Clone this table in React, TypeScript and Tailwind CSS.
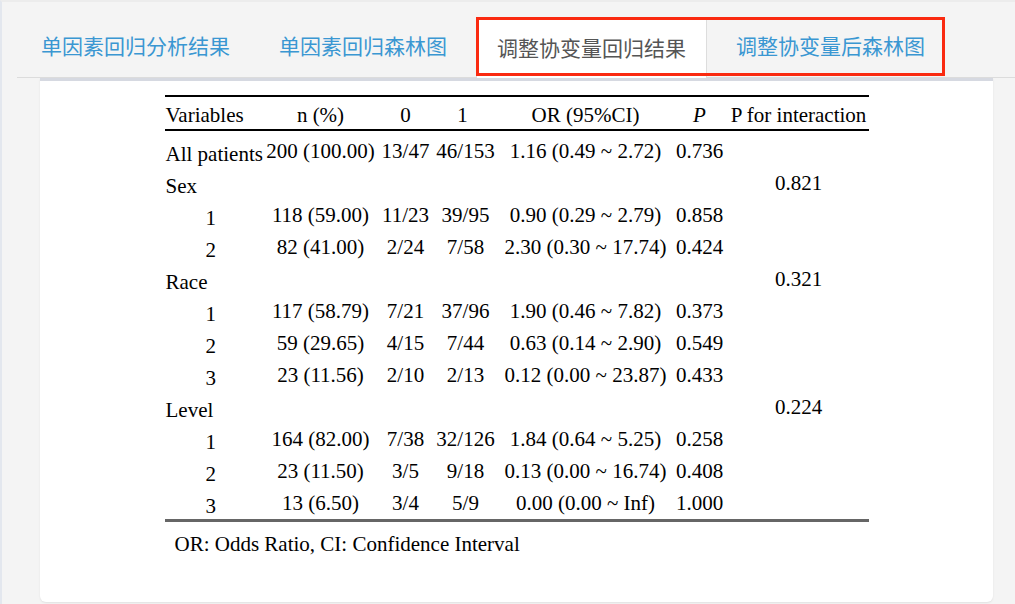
import React from "react";

const tabs = [
  { label: "单因素回归分析结果", active: false },
  { label: "单因素回归森林图", active: false },
  { label: "调整协变量回归结果", active: true },
  { label: "调整协变量后森林图", active: false },
];

type Row = {
  name: string;
  sub?: boolean;
  n?: string;
  c0?: string;
  c1?: string;
  or?: string;
  p?: string;
  inter?: string;
};

const rows: Row[] = [
  { name: "All patients", n: "200 (100.00)", c0: "13/47", c1: "46/153", or: "1.16 (0.49 ~ 2.72)", p: "0.736" },
  { name: "Sex", inter: "0.821" },
  { name: "1", sub: true, n: "118 (59.00)", c0: "11/23", c1: "39/95", or: "0.90 (0.29 ~ 2.79)", p: "0.858" },
  { name: "2", sub: true, n: "82 (41.00)", c0: "2/24", c1: "7/58", or: "2.30 (0.30 ~ 17.74)", p: "0.424" },
  { name: "Race", inter: "0.321" },
  { name: "1", sub: true, n: "117 (58.79)", c0: "7/21", c1: "37/96", or: "1.90 (0.46 ~ 7.82)", p: "0.373" },
  { name: "2", sub: true, n: "59 (29.65)", c0: "4/15", c1: "7/44", or: "0.63 (0.14 ~ 2.90)", p: "0.549" },
  { name: "3", sub: true, n: "23 (11.56)", c0: "2/10", c1: "2/13", or: "0.12 (0.00 ~ 23.87)", p: "0.433" },
  { name: "Level", inter: "0.224" },
  { name: "1", sub: true, n: "164 (82.00)", c0: "7/38", c1: "32/126", or: "1.84 (0.64 ~ 5.25)", p: "0.258" },
  { name: "2", sub: true, n: "23 (11.50)", c0: "3/5", c1: "9/18", or: "0.13 (0.00 ~ 16.74)", p: "0.408" },
  { name: "3", sub: true, n: "13 (6.50)", c0: "3/4", c1: "5/9", or: "0.00 (0.00 ~ Inf)", p: "1.000" },
];

const cols = "grid grid-cols-[100px_112px_58px_62px_178px_50px_144px]";

const App = () => {
  return (
    <div className="min-h-[604px] w-[1015px] bg-[#f4f4f4] border-l-2 border-[#e3e7ee] border-t-2 border-t-[#ececec] font-['Liberation_Serif',serif] text-black">
      {/* tab bar */}
      <div className="relative pt-[15px] pl-[15px]">
        <div className="flex items-end border-b border-[#dcdcdc] pl-[4px]">
          {tabs.map((tab) => (
            <div
              key={tab.label}
              className={
                tab.active
                  ? "mr-[9px] h-[60px] px-[20px] pb-[2px] flex items-center bg-white border border-b-0 border-[#dddddd] text-[#555555] text-[21px] font-['Noto_Sans_CJK_SC',sans-serif] -mb-px"
                  : "mr-[9px] h-[60px] px-[20px] pb-[2px] flex items-center text-[#3a97d2] text-[21px] font-['Noto_Sans_CJK_SC',sans-serif]"
              }
            >
              {tab.label}
            </div>
          ))}
        </div>
        <div className="absolute left-[474px] top-[15px] w-[469px] h-[59px] border-[3px] border-[#fa2a10] pointer-events-none" />
      </div>

      {/* card */}
      <div className="ml-[38px] w-[953px] h-[524px] bg-white border-t-[3px] border-[#d6d9e1] rounded-b-md shadow-[0_1px_2px_rgba(0,0,0,0.08)] pt-[14px]">
        <div className="mx-auto w-[704px] text-[21px] leading-none">
          <div className="border-t-2 border-black">
            <div className={`${cols} h-[32px] items-center pt-[5px]`}>
              <div className="pl-px">Variables</div>
              <div className="text-center">n (%)</div>
              <div className="text-center">0</div>
              <div className="text-center pr-[6px]">1</div>
              <div className="text-center">OR (95%CI)</div>
              <div className="text-center italic">P</div>
              <div className="text-center pl-[4px]">P for interaction</div>
            </div>
          </div>
          <div className="border-t-2 border-black border-b-[3px] border-b-[#666666] pt-[4px]">
            {rows.map((r, i) => (
              <div key={i} className={`${cols} h-[32px] items-center`}>
                <div className={r.sub ? "pl-[41px] pt-[6px]" : "pl-px pt-[6px] whitespace-nowrap"}>{r.name}</div>
                <div className="text-center whitespace-nowrap">{r.n}</div>
                <div className="text-center">{r.c0}</div>
                <div className="text-center">{r.c1}</div>
                <div className="text-center whitespace-nowrap">{r.or}</div>
                <div className="text-center">{r.p}</div>
                <div className="text-center pl-[4px]">{r.inter}</div>
              </div>
            ))}
          </div>
          <div className="pl-[10px] pt-[12px]">OR: Odds Ratio, CI: Confidence Interval</div>
        </div>
      </div>
    </div>
  );
};

export default App;
